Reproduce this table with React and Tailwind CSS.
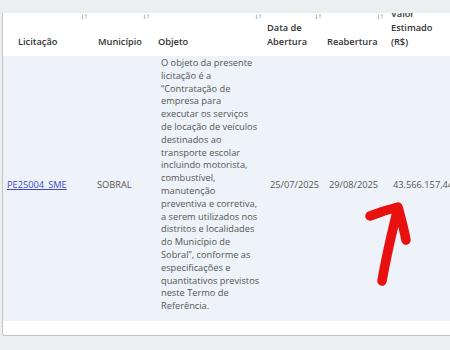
import React from "react";

const objetoLines = [
  "O objeto da presente",
  "licitação é a",
  "\u201cContratação de",
  "empresa para",
  "executar os serviços",
  "de locação de veículos",
  "destinados ao",
  "transporte escolar",
  "incluindo motorista,",
  "combustível,",
  "manutenção",
  "preventiva e corretiva,",
  "a serem utilizados nos",
  "distritos e localidades",
  "do Município de",
  "Sobral\u201d, conforme as",
  "especificações e",
  "quantitativos previstos",
  "neste Termo de",
  "Referência.",
];

const SortIcon = () => (
  <svg width="7" height="5" viewBox="0 0 7 5" className="text-[#9fb3c8]">
    <path d="M1.5 0.5V4.5M0.5 3.5L1.5 4.5L2.5 3.5M5 4.5V0.5M4 1.5L5 0.5L6 1.5" stroke="currentColor" strokeWidth="0.8" fill="none" />
  </svg>
);

const HeadCell = ({ width, pad, icon = true, children }) => (
  <div className={`flex h-full shrink-0 flex-col justify-between ${width}`}>
    <div className="flex h-[6px] justify-end pr-[1px] pt-[1px]">{icon && <SortIcon />}</div>
    <div className={`pb-[7px] ${pad}`}>{children}</div>
  </div>
);

export default function App() {
  return (
    <div
      className="relative h-[350px] w-[450px] overflow-hidden bg-[#eceef0] text-[9.25px]"
      style={{ fontFamily: '"Open Sans", "Noto Sans", sans-serif' }}
    >
      <div className="h-[13px]" />

      {/* table card */}
      <div className="ml-[2px] rounded-bl-[3px] border-b border-l border-[#c2c4c6] bg-white pb-[14px]">
        {/* header */}
        <div className="flex h-[43px] items-end overflow-hidden font-semibold leading-[14px] text-[#333]">
          <HeadCell width="w-[86px]" pad="pl-[15px]">Licitação</HeadCell>
          <HeadCell width="w-[62px]" pad="pl-[9px]">Município</HeadCell>
          <HeadCell width="w-[112px]" pad="pl-[7px]">Objeto</HeadCell>
          <HeadCell width="w-[60px]" pad="pl-[4px]">
            Data de
            <br />
            Abertura
          </HeadCell>
          <HeadCell width="w-[62px]" pad="pl-[4px]">Reabertura</HeadCell>
          <div className="flex-1 pb-[7px] pl-[6px]">
            Valor
            <br />
            Estimado
            <br />
            (R$)
          </div>
        </div>

        {/* row */}
        <div className="flex items-center bg-[#edf3f8] pb-[8px] pt-[1px] text-[#555]">
          <div className="w-[86px] shrink-0 pl-[4px]">
            <a href="#" className="text-[#3f47c9] underline">
              PE25004_SME
            </a>
          </div>
          <div className="w-[62px] shrink-0 pl-[8px]">SOBRAL</div>
          <div className="w-[112px] shrink-0 pl-[10px] leading-[12.8px]">
            {objetoLines.map((l) => (
              <div key={l} className="whitespace-nowrap">
                {l}
              </div>
            ))}
          </div>
          <div className="w-[60px] shrink-0 pl-[7px]">25/07/2025</div>
          <div className="w-[62px] shrink-0 pl-[6px]">29/08/2025</div>
          <div className="flex-1 whitespace-nowrap pl-[8px]">43.566.157,44</div>
        </div>
      </div>

      {/* hand-drawn red arrow over the screenshot */}
      <svg className="absolute left-0 top-0" width="450" height="350" viewBox="0 0 450 350">
        <path
          d="M382 281 C386 258 392 232 398 208 M370 216 C380 212 390 209 398 207 C401 218 404 229 406 240"
          stroke="#e8110f"
          strokeWidth="9.5"
          strokeLinecap="round"
          strokeLinejoin="round"
          fill="none"
        />
      </svg>
    </div>
  );
}
